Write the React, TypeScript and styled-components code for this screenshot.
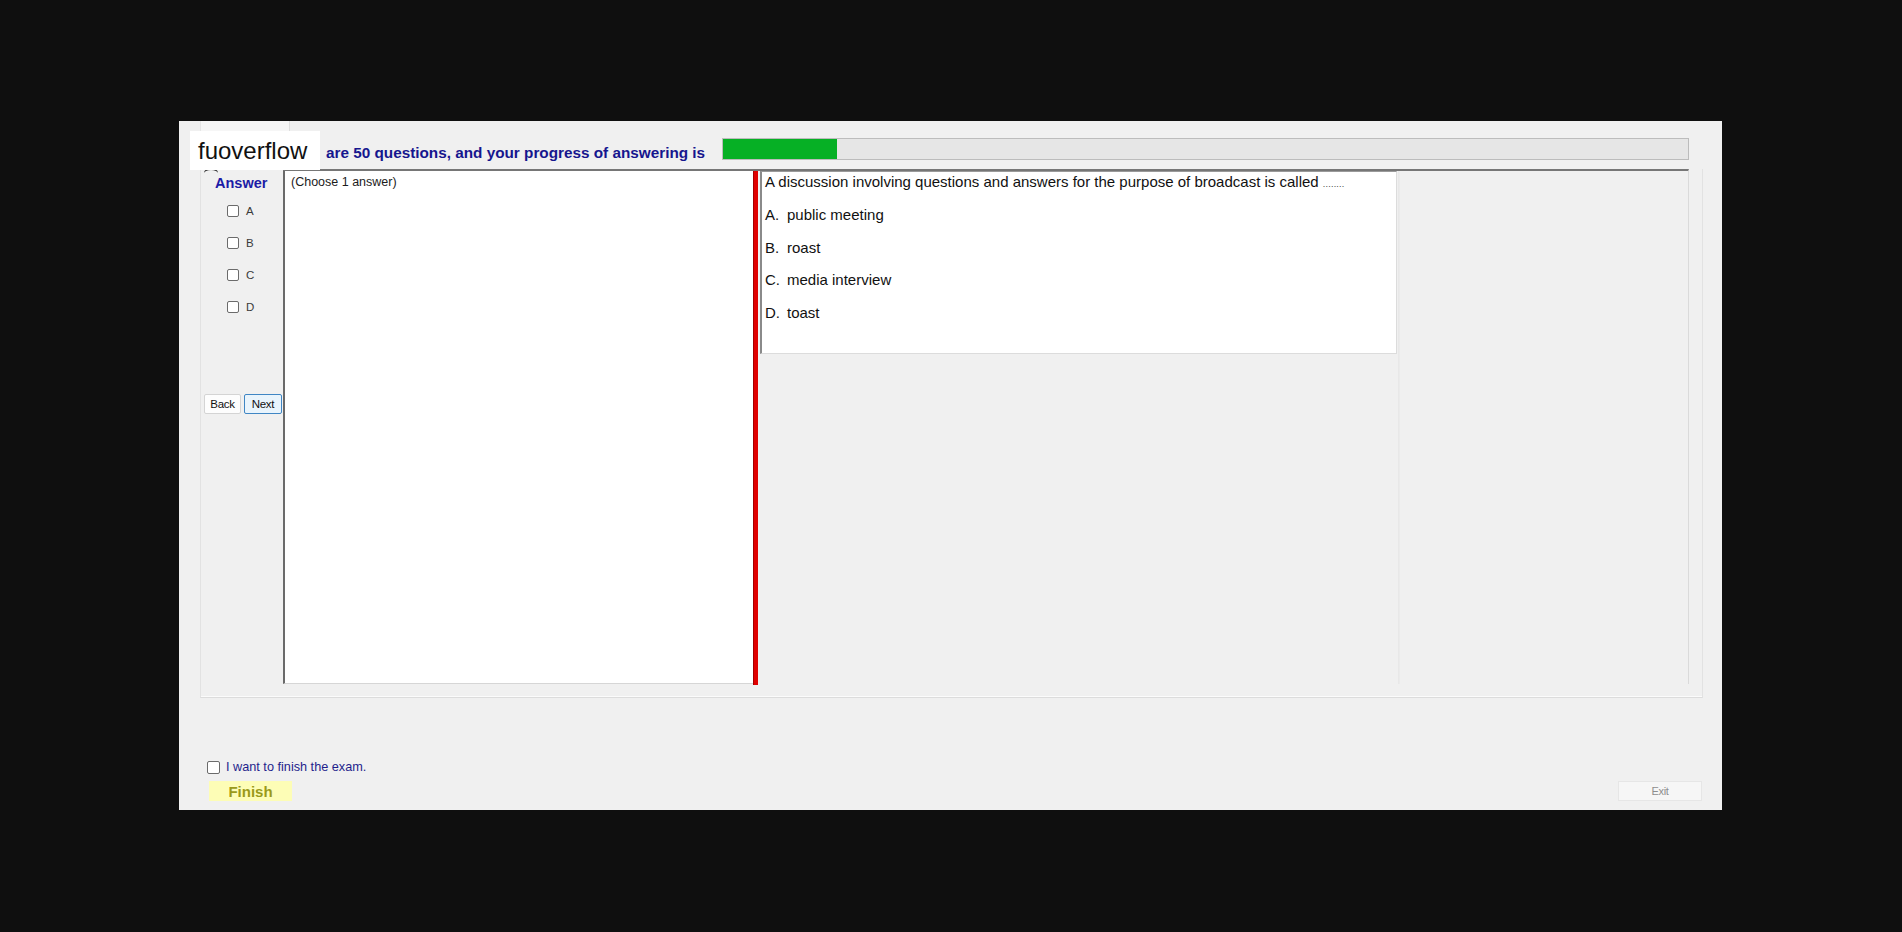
import React from "react";
import styled, { createGlobalStyle } from "styled-components";

const Global = createGlobalStyle`
  html, body { margin: 0; padding: 0; background: #0f0f0f; }
  body { font-family: "Liberation Sans", Arial, sans-serif; }
  * { box-sizing: border-box; }
`;

const Stage = styled.div`
  width: 1902px;
  height: 932px;
  padding: 121px 0 0 179px;
  background: #0f0f0f;
`;

const Window = styled.div`
  position: relative;
  width: 1543px;
  height: 689px;
  background: #f0f0f0;
  display: flex;
  flex-direction: column;
`;

const Header = styled.div`
  position: relative;
  height: 48px;
  display: flex;
  align-items: flex-start;
  padding: 10px 33px 0 11px;
`;

const BackTab = styled.div`
  position: absolute;
  left: 21px;
  top: 0;
  width: 90px;
  height: 11px;
  background: #f6f6f6;
  border-right: 1px solid #dedede;
  border-left: 1px solid #e6e6e6;
`;

const RadioArc = styled.span`
  position: absolute;
  left: 25px;
  top: 47px;
  width: 14px;
  height: 5px;
  border-top: 2px solid #2a2a2a;
  border-radius: 50% 50% 0 0 / 100% 100% 0 0;
  z-index: 1;
`;

const Logo = styled.div`
  position: relative;
  z-index: 2;
  width: 130px;
  height: 39px;
  background: #ffffff;
  padding-left: 8px;
  font-size: 24px;
  line-height: 39px;
  color: #111;
`;

const HeaderText = styled.div`
  margin-left: 6px;
  margin-top: 13px;
  font-size: 15.3px;
  font-weight: 700;
  line-height: 18px;
  color: #16168e;
  white-space: nowrap;
`;

const Progress = styled.div`
  margin-left: auto;
  margin-top: 7px;
  width: 967px;
  height: 22px;
  background: #e6e6e6;
  border: 1px solid #bcbcbc;
  display: flex;
`;

const ProgressFill = styled.div`
  height: 100%;
  background: #06b025;
`;

const MainPanel = styled.div`
  margin-left: 21px;
  width: 1503px;
  height: 529px;
  border-left: 1px solid #e2e2e2;
  border-right: 1px solid #e2e2e2;
  border-bottom: 1px solid #dcdcdc;
  box-shadow: inset 0 -5px 0 -4px #fbfbfb;
  display: flex;
  align-items: flex-start;
`;

const Sidebar = styled.div`
  width: 82px;
  display: flex;
  flex-direction: column;
  padding-top: 6px;
`;

const SideTitle = styled.div`
  padding-left: 14px;
  font-size: 14.5px;
  font-weight: 700;
  line-height: 17px;
  color: #1c1ca6;
`;

const ChoiceList = styled.div`
  margin-top: 12px;
  padding-left: 26px;
  display: flex;
  flex-direction: column;
  gap: 18px;
`;

const ChoiceRow = styled.label`
  display: flex;
  align-items: center;
  gap: 7px;
  height: 14px;
  font-size: 11.5px;
  color: #3a3a3a;
`;

const Box = styled.span<{ $size?: number }>`
  display: inline-block;
  width: ${(p) => p.$size ?? 12}px;
  height: ${(p) => p.$size ?? 12}px;
  border: 1px solid #6b6b6b;
  border-radius: 2px;
  background: #fff;
  flex: none;
`;

const NavRow = styled.div`
  margin-top: 80px;
  padding-left: 3px;
  display: flex;
  gap: 3px;
`;

const NavButton = styled.button<{ $focused?: boolean }>`
  width: ${(p) => (p.$focused ? 38 : 37)}px;
  height: 20px;
  padding: 0;
  font-family: "Liberation Sans", Arial, sans-serif;
  font-size: 11.5px;
  letter-spacing: -0.3px;
  color: #111;
  border-radius: 2px;
  background: ${(p) => (p.$focused ? "#e9f4fc" : "#fdfdfd")};
  border: 1px solid ${(p) => (p.$focused ? "#3f86c4" : "#d4d4d4")};
`;

const Content = styled.div`
  width: 1406px;
  height: 515px;
  border-top: 2px solid #767676;
  border-right: 1px solid #dadada;
  display: flex;
  align-items: stretch;
`;

const AnswerPane = styled.div`
  width: 470px;
  background: #fff;
  border-left: 2px solid #6a6a6a;
  border-bottom: 1px solid #d6d6d6;
  padding: 4px 0 0 6px;
  font-size: 12.5px;
  line-height: 15px;
  color: #1c1c1c;
`;

const RedBar = styled.div`
  width: 5px;
  background: #e00000;
  border-left: 1px solid #a40000;
  margin-bottom: -1px;
`;

const QuestionBox = styled.div`
  margin-left: 2px;
  width: 637px;
  height: 183px;
  background: #fff;
  border-left: 2px solid #8a8a8a;
  border-top: 1px solid #9a9a9a;
  border-right: 1px solid #dcdcdc;
  border-bottom: 1px solid #dcdcdc;
  padding: 0 0 0 3px;
  display: flex;
  flex-direction: column;
  gap: 12.75px;
  font-size: 15px;
  color: #111;
`;

const QLine = styled.div`
  height: 20px;
  line-height: 20px;
  white-space: nowrap;
`;

const Dots = styled.span`
  font-size: 9px;
  letter-spacing: 0.2px;
  color: #444;
`;

const OptLetter = styled.span`
  display: inline-block;
  width: 22px;
`;

const RightPane = styled.div`
  flex: 1;
  margin-left: 1px;
  border-left: 1px solid #e8e8e8;
  box-shadow: inset 4px 0 0 -3px #ebebeb;
`;

const Footer = styled.div`
  flex: 1;
  display: flex;
  align-items: flex-end;
  justify-content: space-between;
  padding: 0 20px 9px 28px;
`;

const FinishCol = styled.div`
  display: flex;
  flex-direction: column;
`;

const FinishCheck = styled.label`
  display: flex;
  align-items: center;
  gap: 6px;
  height: 14px;
  font-size: 12.7px;
  color: #1f1f8c;
`;

const FinishButton = styled.button`
  margin: 7px 0 0 2px;
  width: 83px;
  height: 20px;
  padding: 0;
  border: none;
  background: #fdfdb6;
  font-family: "Liberation Sans", Arial, sans-serif;
  font-size: 15px;
  font-weight: 700;
  color: #9a9a1a;
`;

const ExitButton = styled.button`
  width: 84px;
  height: 20px;
  padding: 0;
  border: 1px solid #e6e6e6;
  background: #f6f6f6;
  font-family: "Liberation Sans", Arial, sans-serif;
  font-size: 11px;
  letter-spacing: -0.3px;
  color: #8e8e8e;
`;

const options = [
  { k: "A.", t: "public meeting" },
  { k: "B.", t: "roast" },
  { k: "C.", t: "media interview" },
  { k: "D.", t: "toast" },
];

export default function App() {
  const progress = 114 / 965;
  return (
    <Stage>
      <Global />
      <Window>
        <Header>
          <BackTab />
          <RadioArc />
          <Logo>fuoverflow</Logo>
          <HeaderText>are 50 questions, and your progress of answering is</HeaderText>
          <Progress>
            <ProgressFill style={{ width: `${progress * 100}%` }} />
          </Progress>
        </Header>
        <MainPanel>
          <Sidebar>
            <SideTitle>Answer</SideTitle>
            <ChoiceList>
              {["A", "B", "C", "D"].map((l) => (
                <ChoiceRow key={l}>
                  <Box />
                  {l}
                </ChoiceRow>
              ))}
            </ChoiceList>
            <NavRow>
              <NavButton>Back</NavButton>
              <NavButton $focused>Next</NavButton>
            </NavRow>
          </Sidebar>
          <Content>
            <AnswerPane>(Choose 1 answer)</AnswerPane>
            <RedBar />
            <QuestionBox>
              <QLine>
                A discussion involving questions and answers for the purpose of broadcast is called <Dots>........</Dots>
              </QLine>
              {options.map((o) => (
                <QLine key={o.k}>
                  <OptLetter>{o.k}</OptLetter>
                  {o.t}
                </QLine>
              ))}
            </QuestionBox>
            <RightPane />
          </Content>
        </MainPanel>
        <Footer>
          <FinishCol>
            <FinishCheck>
              <Box $size={13} />I want to finish the exam.
            </FinishCheck>
            <FinishButton>Finish</FinishButton>
          </FinishCol>
          <ExitButton>Exit</ExitButton>
        </Footer>
      </Window>
    </Stage>
  );
}
